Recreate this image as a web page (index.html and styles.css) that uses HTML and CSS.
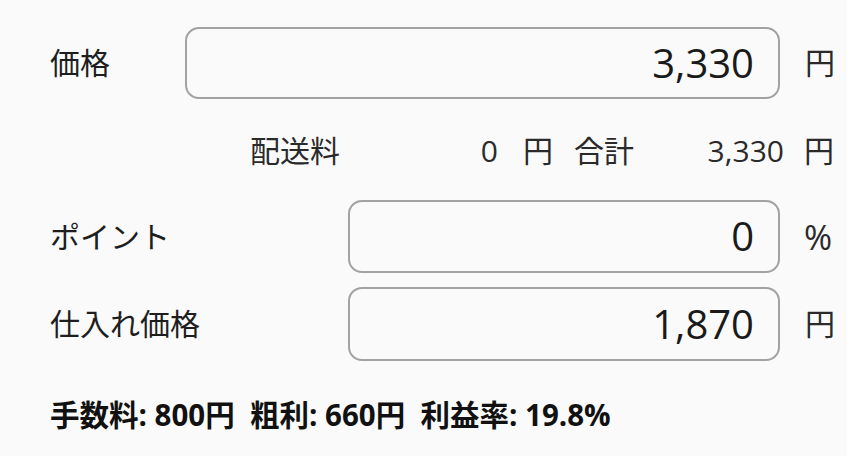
FILE: index.html
```html
<!DOCTYPE html>
<html lang="ja">
<head>
<meta charset="utf-8">
<title>価格計算</title>
<link rel="stylesheet" href="styles.css">
</head>
<body>
<main class="form">
  <div class="row row-price">
    <span class="label label-short">価格</span>
    <div class="field field-wide">3,330</div>
    <span class="unit">円</span>
  </div>
  <div class="row row-summary">
    <span class="s-label">配送料</span>
    <span class="s-value s-ship">0</span>
    <span class="s-unit">円</span>
    <span class="s-total-label">合計</span>
    <span class="s-value s-total">3,330</span>
    <span class="unit">円</span>
  </div>
  <div class="row row-point">
    <span class="label label-long">ポイント</span>
    <div class="field field-narrow">0</div>
    <span class="unit unit-pct">%</span>
  </div>
  <div class="row row-cost">
    <span class="label label-long">仕入れ価格</span>
    <div class="field field-narrow">1,870</div>
    <span class="unit">円</span>
  </div>
  <p class="result">手数料: 800円&nbsp; 粗利: 660円&nbsp; 利益率: 19.8%</p>
</main>
</body>
</html>
```
FILE: styles.css
```css
html, body {
  margin: 0;
  padding: 0;
  background: #fafafa;
}
body {
  font-family: "Open Sans", "Noto Sans CJK JP", sans-serif;
  color: #1e1e1e;
}
.form {
  padding: 27px 0 0 50px;
}
.row {
  display: flex;
  align-items: center;
}
.label {
  font-size: 30px;
  line-height: 40px;
}
.label-short { width: 135px; }
.label-long { width: 298px; }
.field {
  box-sizing: border-box;
  border: 2px solid #a2a2a2;
  border-radius: 14px;
  text-align: right;
  font-size: 40px;
  line-height: 68px;
  padding-right: 24px;
  color: #1a1a1a;
}
.field-wide { width: 595px; height: 72px; }
.field-narrow { width: 432px; height: 73px; }
.row-cost .field-narrow { height: 74px; line-height: 70px; }
.unit {
  margin-left: 25px;
  font-size: 30px;
  line-height: 40px;
  color: #2a2a2a;
}
.unit-pct {
  font-size: 34px;
  margin-left: 24px;
}
.row-summary {
  margin-top: 30px;
  height: 44px;
  padding-left: 200px;
  font-size: 30px;
  line-height: 44px;
  color: #2a2a2a;
}
.row-summary .unit { margin-left: 20px; }
.s-label { width: 90px; }
.s-value { text-align: right; }
.s-ship { width: 158px; }
.s-unit { margin-left: 25px; width: 30px; }
.s-total-label { margin-left: 21px; width: 60px; }
.s-total { width: 150px; }
.row-point { margin-top: 27px; }
.row-cost { margin-top: 14px; }
.result {
  margin: 34px 0 0;
  font-size: 29.5px;
  line-height: 40px;
  font-weight: bold;
  color: #111;
}
```
